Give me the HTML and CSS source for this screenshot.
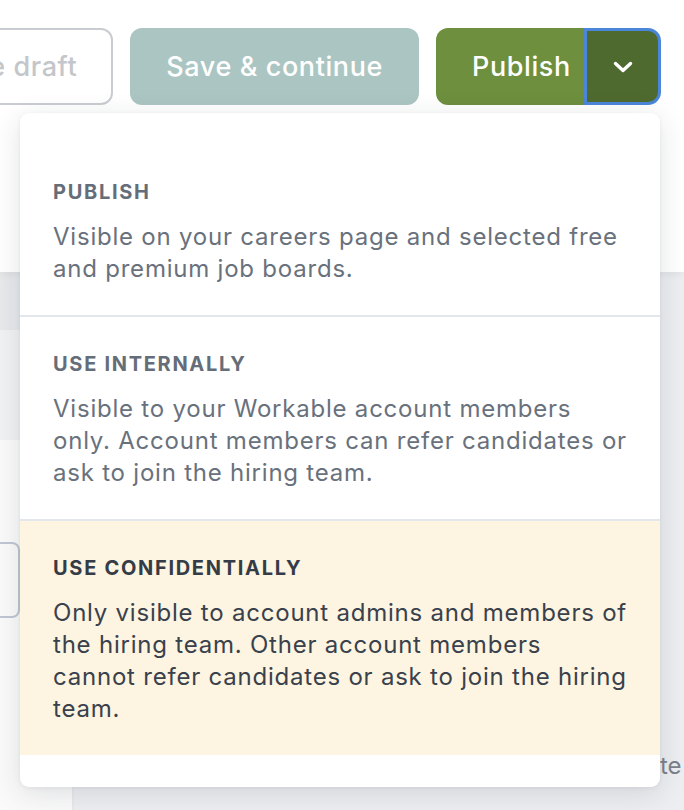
FILE: index.html
```html
<!DOCTYPE html>
<html lang="en">
<head>
<meta charset="utf-8">
<title>Publish options</title>
<link rel="stylesheet" href="styles.css">
</head>
<body>
<div class="page">
  <header class="header">
    <div class="actions">
      <button class="btn btn-draft">Save draft</button>
      <button class="btn btn-save">Save &amp; continue</button>
      <div class="split">
        <button class="btn btn-publish">Publish</button>
        <button class="btn btn-toggle" aria-label="More publish options">
          <svg width="22" height="14" viewBox="0 0 22 14"><path d="M3.5 3.5 L11 10.5 L18.5 3.5" fill="none" stroke="#fff" stroke-width="3.4" stroke-linecap="round" stroke-linejoin="round"/></svg>
        </button>
      </div>
    </div>
  </header>
  <main class="content">
    <aside class="sidebar">
      <div class="side-a"></div>
      <div class="side-b"></div>
      <div class="side-c"><div class="side-input"></div></div>
    </aside>
    <div class="main-area">
      <p class="ghost-text">te</p>
    </div>
  </main>

  <div class="menu">
    <div class="option">
      <h3 class="option-title">PUBLISH</h3>
      <p class="option-desc">Visible on your careers page and selected free and premium job boards.</p>
    </div>
    <div class="option">
      <h3 class="option-title">USE INTERNALLY</h3>
      <p class="option-desc">Visible to your Workable account members only. Account members can refer candidates or ask to join the hiring team.</p>
    </div>
    <div class="option option-active">
      <h3 class="option-title">USE CONFIDENTIALLY</h3>
      <p class="option-desc">Only visible to account admins and members of the hiring team. Other account members cannot refer candidates or ask to join the hiring team.</p>
    </div>
  </div>
</div>
</body>
</html>
```
FILE: styles.css
```css
* { box-sizing: border-box; }
html, body { margin: 0; padding: 0; }
body {
  font-family: Inter, "Noto Sans", "Liberation Sans", sans-serif;
  background: #eceef1;
  width: 684px;
  height: 810px;
  overflow: hidden;
}
.page {
  position: relative;
  width: 684px;
  height: 810px;
  display: flex;
  flex-direction: column;
}
.header {
  height: 272px;
  background: #fff;
  box-shadow: 0 3px 8px rgba(0,0,0,0.05);
  position: relative;
  z-index: 1;
  padding: 28px 23px 0 0;
}
.actions {
  display: flex;
  justify-content: flex-end;
  gap: 17px;
}
.btn {
  font-family: inherit;
  height: 77px;
  border: none;
  font-size: 27px;
  font-weight: 500;
  color: #fff;
  padding: 0 36px;
  white-space: nowrap;
  flex-shrink: 0;
  letter-spacing: 0.6px;
}
.btn-draft {
  background: #fff;
  border: 2px solid #c9ccd0;
  border-radius: 12px;
  color: #c3c6ca;
  padding: 0 34px;
}
.btn-save {
  background: #abc6c2;
  border-radius: 12px;
}
.split { display: flex; }
.btn-publish {
  background: #6d8f3e;
  border-radius: 12px 0 0 12px;
  width: 148px;
  padding: 0 0 0 36px;
  text-align: left;
}
.btn-toggle {
  width: 77px;
  padding: 0;
  background: #4f6a2e;
  border: 3px solid #4a86d9;
  border-radius: 0 13px 13px 0;
  display: flex;
  align-items: center;
  justify-content: center;
}
.btn-toggle svg { display: block; margin-top: 1px; }

.content {
  flex: 1;
  display: flex;
}
.sidebar {
  width: 72px;
  display: flex;
  flex-direction: column;
  background: #f8f9fa;
  box-shadow: 1px 0 3px rgba(0,0,0,0.04);
}
.side-a { height: 58px; background: #e7e9eb; }
.side-b { height: 110px; background: #f1f2f3; }
.side-c { flex: 1; background: #fafafa; padding-top: 102px; }
.side-input {
  height: 76px;
  border: 2px solid #c0c7d2;
  border-left: none;
  border-radius: 0 8px 8px 0;
  width: 20px;
}
.main-area {
  flex: 1;
  display: flex;
  justify-content: flex-end;
  align-items: flex-end;
}
.ghost-text {
  margin: 0 -10px 30px 0;
  font-size: 24px;
  color: #7b828b;
  width: 34px;
}

.menu {
  position: absolute;
  left: 20px;
  top: 113px;
  width: 640px;
  background: #fff;
  border-radius: 9px;
  box-shadow: 0 6px 28px rgba(30,40,55,0.13), 0 1px 4px rgba(30,40,55,0.06);
  padding: 32px 0;
  z-index: 2;
  overflow: hidden;
}
.option {
  padding: 35px 31px 30px 33px;
  border-bottom: 2px solid #e3e6ea;
}
.option:last-child { border-bottom: none; }
.option-title {
  margin: 0 0 17px;
  font-size: 20px;
  line-height: 24px;
  font-weight: 700;
  letter-spacing: 1.7px;
  color: #656d78;
}
.option-desc {
  margin: 0;
  font-size: 24px;
  line-height: 32px;
  letter-spacing: 0.78px;
  color: #69717c;
  font-weight: 400;
}
.option-active { background: #fdf4e1; }
.option-active .option-title { color: #353c47; }
.option-active .option-desc { color: #39414c; }
```
